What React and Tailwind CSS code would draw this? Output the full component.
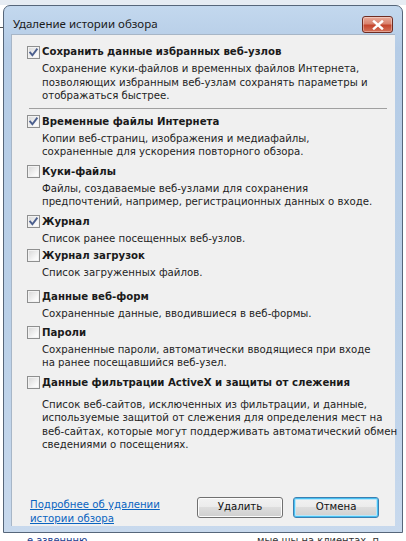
import React from "react";

const F = "font-['DejaVu_Sans_Condensed','Liberation_Sans',sans-serif]";

function Check({ checked }) {
  return (
    <div className="w-[13px] h-[13px] shrink-0 border border-[#8e8f8f] bg-[linear-gradient(135deg,#d6d6d6,#f8f8f8_70%,#ffffff)] shadow-[inset_0_0_0_1px_#f2f2f2] relative">
      {checked && (
        <svg viewBox="0 0 11 11" className="absolute left-0 top-0 w-[11px] h-[11px]">
          <path d="M2.2 5.6 L4.4 8.2 L8.8 2.4" fill="none" stroke="#4b5f8e" strokeWidth="1.9" strokeLinecap="square" />
        </svg>
      )}
    </div>
  );
}

function Item({ checked, title, lines, mt, dmt = "mt-[3px]" }) {
  return (
    <div className={`pl-[15px] ${mt}`}>
      <div className="flex items-center h-[14px]">
        <Check checked={checked} />
        <span className="ml-[2px] font-bold text-[11.3px] leading-[14px] text-[#1a1a1a] whitespace-nowrap">{title}</span>
      </div>
      <div className={`${dmt} pl-[15px] text-[11.3px] leading-[13.5px] text-[#1e1e1e]`}>
        {lines.map((l, i) => (
          <div key={i} className="whitespace-nowrap">{l}</div>
        ))}
      </div>
    </div>
  );
}

export default function App() {
  return (
    <div className={`w-[406px] h-[541px] bg-white overflow-hidden relative ${F}`}>
      <div className="h-[5px] bg-[#e6ecf3]" />
      <div className="absolute left-0 top-[27px] w-[3px] h-px bg-[#555]" />
      <div className="absolute left-0 top-[534px] w-[406px] h-[7px] overflow-hidden text-[#1c3f8f] text-[11px]">
        <div className="absolute left-[27px] top-0 leading-[14px] whitespace-nowrap">е азвеннню</div>
        <div className="absolute left-[257px] top-0 leading-[14px] whitespace-nowrap text-[#333]">мые шы на клиентах, п</div>
      </div>
      <div className="ml-[3px] w-[400px] h-[528px] border border-[#56667a] rounded-t-[7px] bg-[linear-gradient(180deg,#c3d8ee_0%,#b5cce6_8%,#bad0e8_60%,#c8d9ed_100%)] flex flex-col">
        <div className="h-[28px] flex items-start justify-between pl-[9px] pr-[9px] shrink-0">
          <span className="mt-[11px] text-[11.5px] leading-[14px] text-[#1b1b1b] font-['Noto_Sans',sans-serif] whitespace-nowrap">Удаление истории обзора</span>
          <div className="mt-[10px] w-[31px] h-[17px] rounded-[3px] border border-[#6e2c22] bg-[linear-gradient(180deg,#e9a999_0%,#d9826e_45%,#c4452d_55%,#d5735a_100%)] flex items-center justify-center shadow-[inset_0_0_0_1px_rgba(255,255,255,0.35)]">
            <svg viewBox="0 0 12 10" className="w-[12px] h-[10px]">
              <path d="M2 1.5 L10 8.5 M10 1.5 L2 8.5" stroke="#ffffff" strokeWidth="2.4" strokeLinecap="square" />
            </svg>
          </div>
        </div>
        <div className="mx-[7px] h-[492px] bg-[#f0f0f0] border-l border-t border-[#a7b6c7] flex flex-col">
          <Item
            checked
            mt="mt-[10px]"
            title="Сохранить данные избранных веб-узлов"
            lines={[
              "Сохранение куки-файлов и временных файлов Интернета,",
              "позволяющих избранным веб-узлам сохранять параметры и",
              "отображаться быстрее.",
            ]}
          />
          <div className="ml-[17px] mr-[8px] mt-[5px] h-px bg-[#a0a0a0] shrink-0" />
          <Item
            checked
            mt="mt-[6px]"
            title="Временные файлы Интернета"
            lines={["Копии веб-страниц, изображения и медиафайлы,", "сохраненные для ускорения повторного обзора."]}
          />
          <Item
            mt="mt-[6px]"
            title="Куки-файлы"
            lines={[
              "Файлы, создаваемые веб-узлами для сохранения",
              "предпочтений, например, регистрационных данных о входе.",
            ]}
          />
          <Item checked mt="mt-[6px]" title="Журнал" lines={["Список ранее посещенных веб-узлов."]} />
          <Item mt="mt-[3.5px]" title="Журнал загрузок" lines={["Список загруженных файлов."]} />
          <Item mt="mt-[10.5px]" title="Данные веб-форм" lines={["Сохраненные данные, вводившиеся в веб-формы."]} />
          <Item
            mt="mt-[5.5px]"
            title="Пароли"
            lines={["Сохраненные пароли, автоматически вводящиеся при входе", "на ранее посещавшийся веб-узел."]}
          />
          <Item
            mt="mt-[6px]"
            dmt="mt-[8px]"
            title="Данные фильтрации ActiveX и защиты от слежения"
            lines={[
              "Список веб-сайтов, исключенных из фильтрации, и данные,",
              "используемые защитой от слежения для определения мест на",
              "веб-сайтах, которые могут поддерживать автоматический обмен",
              "сведениями о посещениях.",
            ]}
          />
          <div className="mt-auto flex items-end justify-between pl-[18px] pr-[16px]">
            <div className="text-[11.3px] leading-[14px] text-[#0a64c0] underline mb-0">
              <div>Подробнее об удалении</div>
              <div>истории обзора</div>
            </div>
            <div className="flex gap-[10px] mb-[8px]">
              <button className="w-[86px] h-[21px] rounded-[3px] border border-[#707070] bg-[linear-gradient(180deg,#f2f2f2_0%,#ebebeb_50%,#dddddd_50%,#cfcfcf_100%)] shadow-[inset_0_0_0_1px_#fcfcfc] text-[11.3px] text-[#111]">
                Удалить
              </button>
              <button className="w-[86px] h-[21px] rounded-[3px] border border-[#3c7fb1] bg-[linear-gradient(180deg,#f2f2f2_0%,#ebebeb_50%,#dddddd_50%,#cfcfcf_100%)] shadow-[inset_0_0_0_1px_#48c1f2,inset_0_0_0_2px_#b8e6fa] text-[11.3px] text-[#111]">
                Отмена
              </button>
            </div>
          </div>
        </div>
      </div>
    </div>
  );
}
